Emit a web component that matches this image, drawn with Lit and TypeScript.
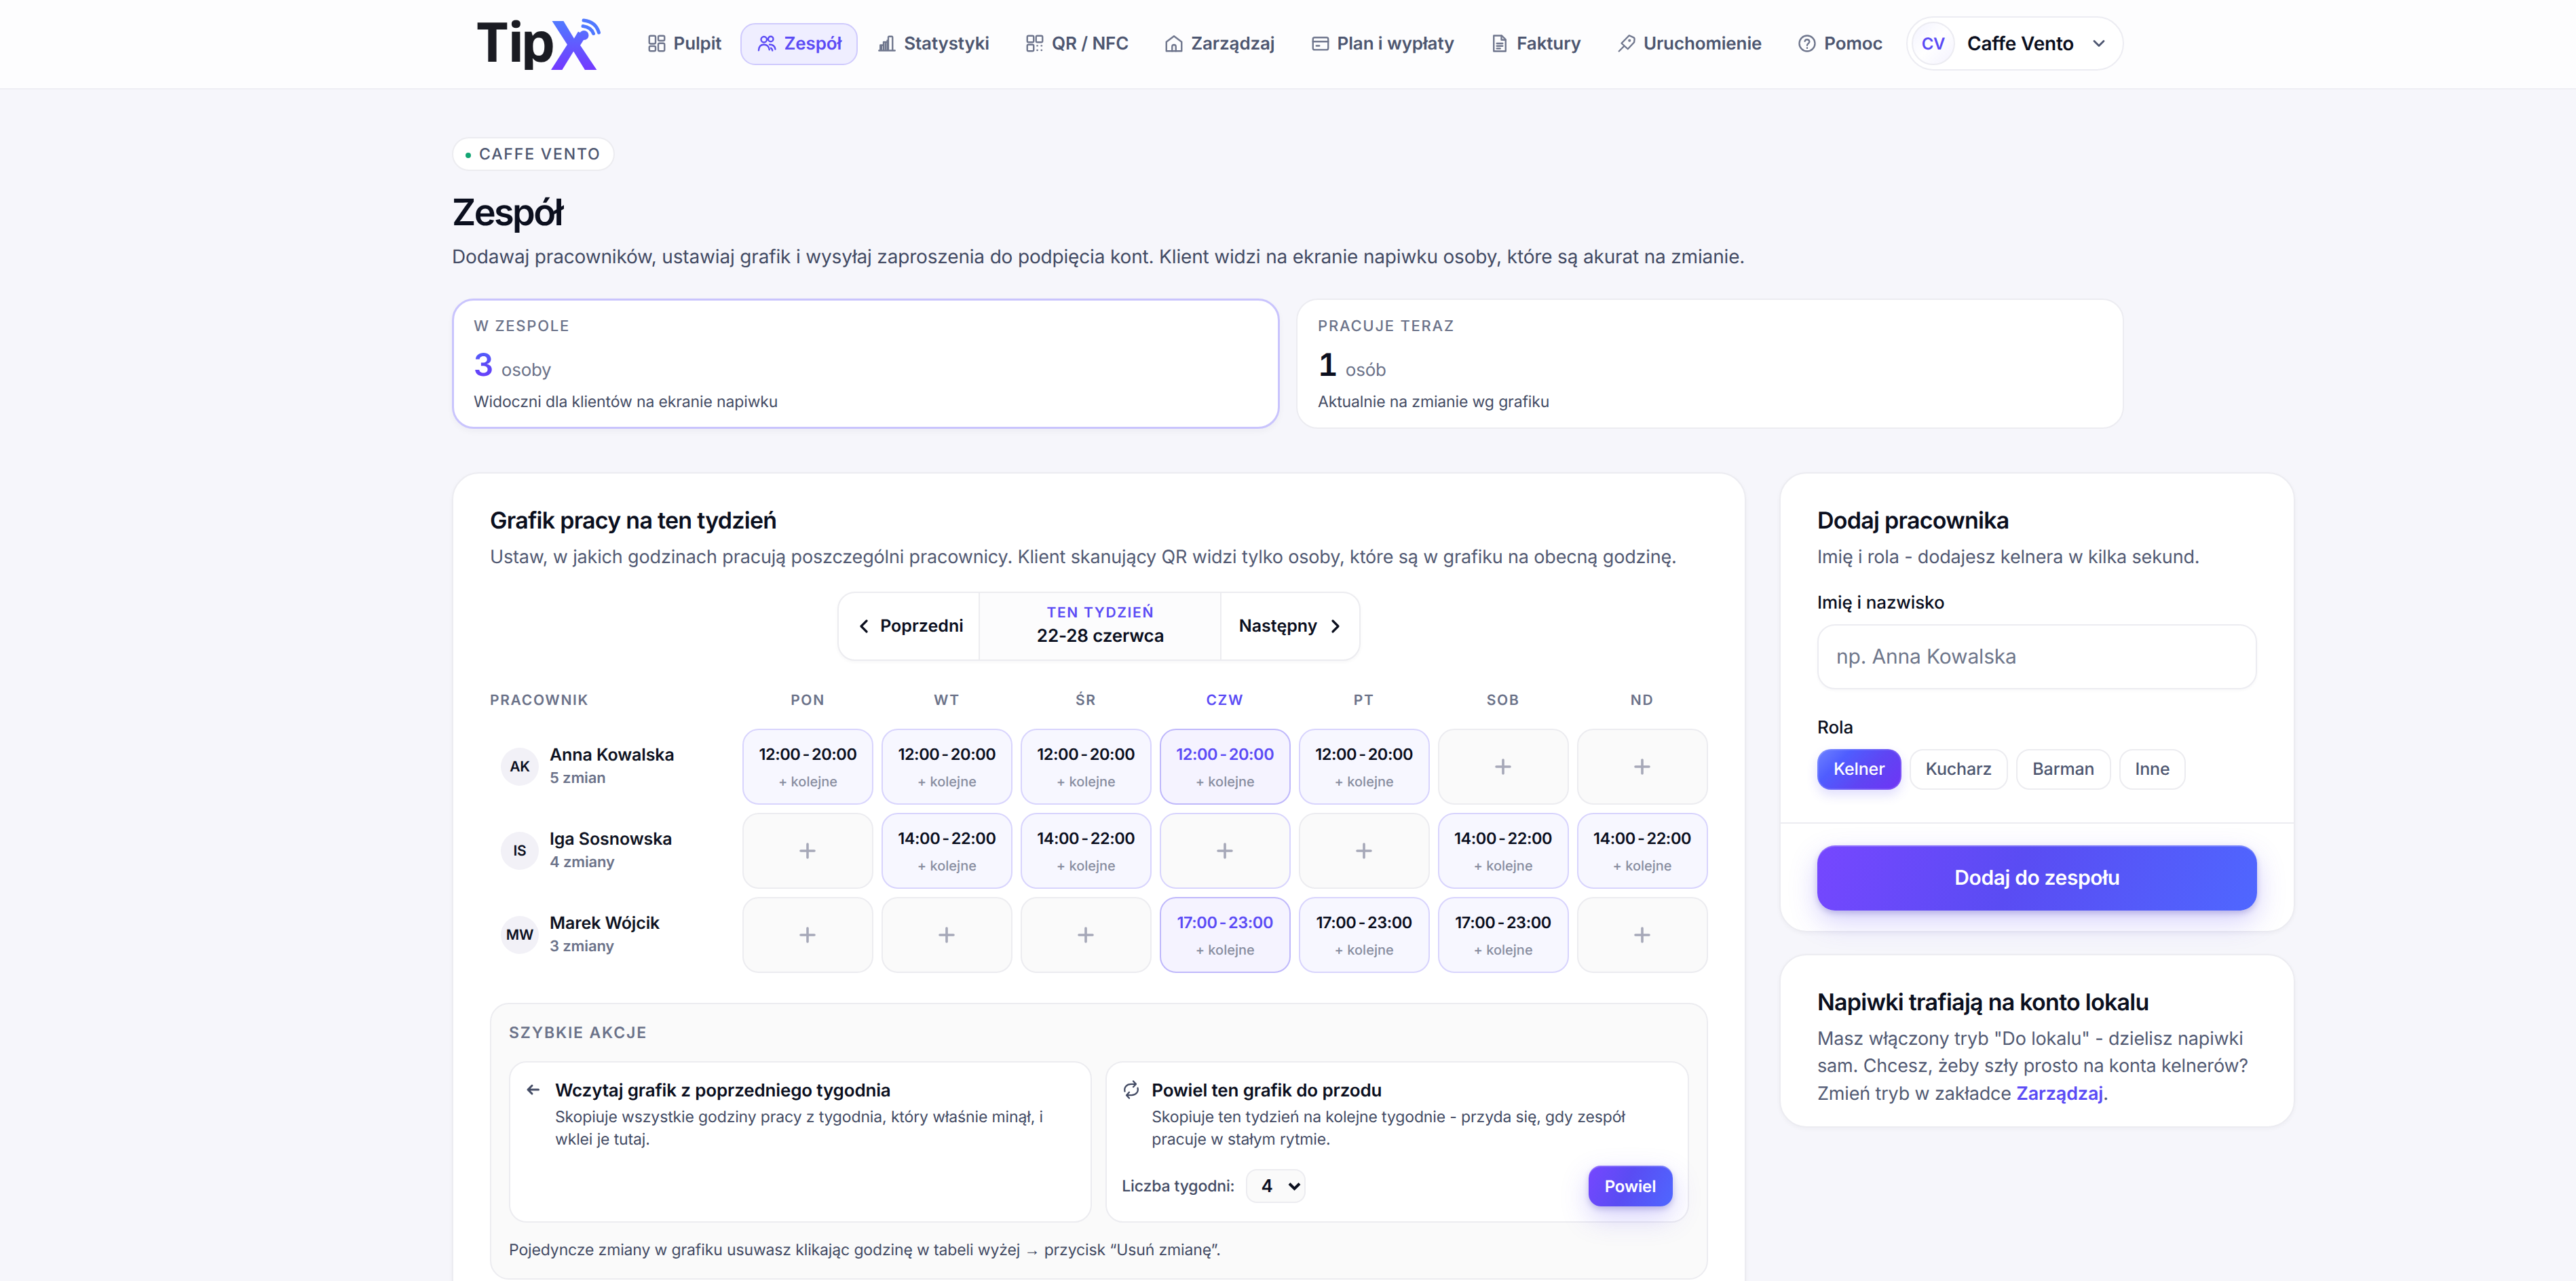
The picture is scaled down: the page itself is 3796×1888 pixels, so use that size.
import { LitElement, html, css, svg } from "lit";
import { customElement } from "lit/decorators.js";
import { classMap } from "lit/directives/class-map.js";

const ICONS = {
  dashboard: svg`<rect x="3" y="3" width="7.400" height="9.400" rx="1.600"/><rect x="13.600" y="3" width="7.400" height="5.800" rx="1.600"/><rect x="13.600" y="11.800" width="7.400" height="9.200" rx="1.600"/><rect x="3" y="15.200" width="7.400" height="5.800" rx="1.600"/>`,
  team: svg`<circle cx="8.600" cy="7.400" r="3.400"/><path d="M2.400 20.200c.2-4.400 2.600-6.800 6.200-6.800s5.800 2.200 6.400 6"/><circle cx="16.600" cy="6.800" r="3"/><path d="M15.200 13.400c3.800-.2 6.200 1.800 6.800 5.400M16.800 17.400c1 .8 1.600 1.800 1.800 3"/>`,
  stats: svg`<path d="M2.600 20.400h18.800M4.200 20v-6h3.800v6M8 20v-9.600h4.400V20M13.600 20V4.800a1 1 0 0 1 1-1h3a1 1 0 0 1 1 1V20M12.400 8.600h1.200"/><path d="M5.600 15v4M10.200 12v7" />`,
  qr: svg`<rect x="3" y="3" width="7.600" height="7.600" rx="1.500"/><rect x="13.400" y="3" width="7.600" height="7.600" rx="1.500"/><rect x="3" y="13.400" width="7.600" height="7.600" rx="1.500"/><path d="M14.700 14.700h.3M19.700 14.700h.3M14.700 20h.3M19.700 20h.3"/>`,
  home: svg`<path d="M3 10.200 12 3.400l9 6.800V21H3z"/><path d="M9.800 21v-5.200a2.200 2.200 0 0 1 4.400 0V21"/>`,
  card: svg`<rect x="3" y="5" width="18" height="14.500" rx="2"/><path d="M3 9.800h18M7 14.800h3.600"/>`,
  invoice: svg`<path d="M5 2.800h9.400L19 7.400V21.200H5z"/><path d="M14 3v4.800h4.800M8.600 12h6.800M8.600 15h6.800M8.600 18h4"/>`,
  rocket: svg`<path d="M15 2.600l5.400 2.500q1 .6.9 1.700l-.4 3.800-7.500 8-7.400-6.800z"/><path d="M3 21.200l6.200-6.200"/><circle cx="15.400" cy="8.600" r=".7"/>`,
  help: svg`<circle cx="12" cy="12" r="9.200"/><path d="M9.300 9.400a2.750 2.750 0 0 1 5.400.6c0 1.900-2.700 2.300-2.700 4.200M12 17.200v.3"/>`,
  chevDown: svg`<path d="M6 9l6 6 6-6"/>`,
};

type IconName = keyof typeof ICONS;

const icon = (name: IconName, cls = "ico") =>
  html`<svg class=${cls} viewBox="0 0 24 24">${ICONS[name]}</svg>`;

const NAV: { label: string; icon: IconName; active?: boolean }[] = [
  { label: "Pulpit", icon: "dashboard" },
  { label: "Zespół", icon: "team", active: true },
  { label: "Statystyki", icon: "stats" },
  { label: "QR / NFC", icon: "qr" },
  { label: "Zarządzaj", icon: "home" },
  { label: "Plan i wypłaty", icon: "card" },
  { label: "Faktury", icon: "invoice" },
  { label: "Uruchomienie", icon: "rocket" },
  { label: "Pomoc", icon: "help" },
];

const DAYS = ["PON", "WT", "ŚR", "CZW", "PT", "SOB", "ND"];
const TODAY = 3;

const STAFF = [
  { initials: "AK", name: "Anna Kowalska", count: "5 zmian", from: "12:00", to: "20:00", days: [0, 1, 2, 3, 4] },
  { initials: "IS", name: "Iga Sosnowska", count: "4 zmiany", from: "14:00", to: "22:00", days: [1, 2, 5, 6] },
  { initials: "MW", name: "Marek Wójcik", count: "3 zmiany", from: "17:00", to: "23:00", days: [3, 4, 5] },
];

const ROLES = ["Kelner", "Kucharz", "Barman", "Inne"];

@customElement("top-bar")
export class TopBar extends LitElement {
  static styles = css`
    :host { display: block; background: #fdfdfe; border-bottom: 2px solid #eeeef3; height: 130px; }
    .inner { width: 2464px; height: 130px; margin: 0 auto; display: flex; align-items: center; }
    .logo { width: 240px; height: 130px; margin-right: 22.500px; flex: none; overflow: visible; }
    .nav { display: flex; gap: 4px; flex: none; }
    .item {
      display: flex; align-items: center; gap: 10px; height: 56px; padding: 0 22px 2px; border: 2px solid transparent;
      border-radius: 22px; font-size: 26px; font-weight: 600; color: #4d5670; white-space: nowrap; letter-spacing: -0.005em;
    }
    .item.active { color: #5b4bf5; background: #efeeff; border-color: #cfcafd; }
    .ico { width: 30px; height: 30px; fill: none; stroke: #6f768d; stroke-width: 1.900; stroke-linecap: round; stroke-linejoin: round; }
    .active .ico { stroke: #5b4bf5; }
    .account {
      margin-left: auto; display: flex; align-items: center; box-sizing: border-box; height: 80px; width: 321px; margin-top: -2px;
      border: 2px solid #ececf2; border-radius: 40px; background: #fff; padding-left: 6px; flex: none;
    }
    .avatar {
      box-sizing: border-box; width: 64px; height: 64px; border-radius: 50%; border: 2px solid #ececf2;
      display: flex; align-items: center; justify-content: center; font-size: 24px; font-weight: 600; color: #5b4bf5; letter-spacing: -0.3px;
      background: linear-gradient(135deg, #f3f3ff, #fff 50%, #f3f2fe);
    }
    .name { margin-left: 18px; font-size: 28px; font-weight: 600; color: #0b0f1e; flex: 1; letter-spacing: -0.2px; }
    .chev { width: 28px; height: 28px; margin-right: 21px; fill: none; stroke: #4d5670; stroke-width: 2.400; stroke-linecap: round; stroke-linejoin: round; }
  `;

  render() {
    return html`<div class="inner">
      <svg class="logo" viewBox="0 0 240 130">
        <defs>
          <linearGradient id="g" gradientUnits="userSpaceOnUse" x1="0" y1="28" x2="0" y2="104">
            <stop offset="0" stop-color="#4f7dff" /><stop offset="1" stop-color="#7438ff" />
          </linearGradient>
        </defs>
        <g font-family="Open Sans" font-size="81" font-weight="700" fill="#1a1b22">
          <text x="36" y="91">T</text><text x="82" y="91">i</text><text x="101" y="91">p</text>
        </g>
        <path d="M100 103h40v16h-40z" fill="#fdfdfe" />
        <text x="146" y="103" font-family="Open Sans" font-size="101" font-weight="700" fill="url(#g)">X</text>
        <path d="M181 26h40v30h-17l-23-12z" fill="#fdfdfe" />
        <circle cx="194.500" cy="52" r="7" fill="url(#g)" />
        <g fill="none" stroke="#4f78ff" stroke-width="5" stroke-linecap="round">
          <path d="M193 38.500q12 1.500 15.500 11" /><path d="M194 30q18 2 22.500 18" />
        </g>
      </svg>
      <nav class="nav">
        ${NAV.map((n) => html`<div class=${classMap({ item: true, active: !!n.active })}>${icon(n.icon)}<span>${n.label}</span></div>`)}
      </nav>
      <div class="account">
        <div class="avatar">CV</div>
        <div class="name">Caffe Vento</div>
        ${icon("chevDown", "chev")}
      </div>
    </div>`;
  }
}

@customElement("shift-grid")
export class ShiftGrid extends LitElement {
  static styles = css`
    :host { display: block; }
    .grid { display: grid; grid-template-columns: 360px repeat(7, minmax(0, 1fr)); gap: 12px; }
    .head { font-size: 21px; line-height: 34px; font-weight: 600; letter-spacing: 0.080em; color: #6b7289; text-align: center; margin-bottom: 12px; }
    .head.first { text-align: left; }
    .head.today { color: #5b4bf5; }
    .person { display: flex; align-items: center; padding-left: 16px; gap: 16px; }
    .avatar {
      width: 56px; height: 56px; border-radius: 50%; background: #f2f1f7; display: flex; align-items: center; justify-content: center;
      font-size: 21px; font-weight: 600; color: #0b0f1e; letter-spacing: -0.2px;
    }
    .who { margin-top: -1px; }
    .name { font-size: 25px; line-height: 34px; font-weight: 600; color: #0f1322; letter-spacing: -0.004em; }
    .count { font-size: 22px; line-height: 34px; font-weight: 600; color: #6b7289; letter-spacing: -0.006em; }
    .cell {
      box-sizing: border-box; height: 112px; border: 2px solid #ececf0; border-radius: 24px; background: #fafafa;
      display: flex; flex-direction: column; align-items: center; justify-content: center;
    }
    .cell.on { background: #f7f7ff; border-color: #d8d4fd; padding-top: 4px; }
    .cell.today { border-color: #d8d4fd; }
    .cell.on.today { background: #f5f3ff; border-color: #bfb8fb; }
    .time { font-size: 23.500px; line-height: 40px; font-weight: 600; color: #0b0f1e; display: flex; gap: 3px; letter-spacing: -0.018em; }
    .today .time { color: #5b4bf5; }
    .more { font-size: 20px; line-height: 41px; color: #888da0; font-weight: 500; }
    .plus { width: 24px; height: 24px; stroke: #a6a8b8; stroke-width: 3.600; stroke-linecap: round; fill: none; }
  `;

  render() {
    return html`<div class="grid">
      <div class="head first">PRACOWNIK</div>
      ${DAYS.map((d, i) => html`<div class=${classMap({ head: true, today: i === TODAY })}>${d}</div>`)}
      ${STAFF.map(
        (p) => html`<div class="person">
            <div class="avatar">${p.initials}</div>
            <div class="who"><div class="name">${p.name}</div><div class="count">${p.count}</div></div>
          </div>
          ${DAYS.map((_, i) => {
            const on = p.days.includes(i);
            return html`<div class=${classMap({ cell: true, on, today: i === TODAY })}>
              ${on
                ? html`<div class="time"><span>${p.from}</span><span>-</span><span>${p.to}</span></div><div class="more">+ kolejne</div>`
                : html`<svg class="plus" viewBox="0 0 24 24"><path d="M12 2v20M2 12h20" /></svg>`}
            </div>`;
          })}`
      )}
    </div>`;
  }
}

@customElement("app-root")
export class AppRoot extends LitElement {
  static styles = css`
    :host {
      display: block; height: 1888px; overflow: hidden; background: #f6f6fb; color: #0b0f1e;
      font-family: Inter, "Liberation Sans", sans-serif; text-rendering: geometricPrecision;
    }
    .page { width: 2464px; margin: 0 auto; padding-top: 70px; }
    .pill {
      display: inline-flex; align-items: center; box-sizing: border-box; height: 50px; padding: 0 18px; gap: 12px; vertical-align: top;
      border: 2px solid #ececf0; border-radius: 25px; background: #fff; font-size: 23px; font-weight: 500; letter-spacing: 0.080em; color: #4d5670;
    }
    .dot { width: 8px; height: 8px; border-radius: 50%; background: #12a573; margin-top: 3px; }
    .title { margin: 29px 0 0; font-size: 54px; line-height: 66px; font-weight: 600; letter-spacing: -0.048em; }
    .lead { margin: 11px 0 0; font-size: 28px; line-height: 40px; color: #434b64; white-space: nowrap; letter-spacing: -0.006em; }
    .stats { display: grid; grid-template-columns: 1fr 1fr; gap: 24px; margin-top: 42px; }
    .stat { box-sizing: border-box; height: 192px; border: 2px solid #ececf1; border-radius: 32px; background: #fff; padding: 22px 30px 0; }
    .stat.main { border: 3px solid #c9c4fd; padding: 21px 29px 0; box-shadow: 0 4px 10px rgba(20, 20, 50, 0.040); }
    .stat-label { font-size: 22px; line-height: 34px; font-weight: 500; letter-spacing: 0.080em; color: #6b7289; }
    .stat-row { display: flex; align-items: baseline; gap: 12px; margin-top: 12px; line-height: 56px; }
    .num { font-size: 46px; font-weight: 600; font-variant-numeric: tabular-nums; letter-spacing: -0.020em; }
    .main .num { background: linear-gradient(180deg, #4f67ff, #5b4bf5 45%, #6f3cff); -webkit-background-clip: text; background-clip: text; color: transparent; }
    .unit { font-size: 26px; color: #6b7289; letter-spacing: -0.010em; }
    .stat-sub { font-size: 23px; line-height: 32px; color: #434b64; margin-top: 2px; letter-spacing: -0.006em; }

    .cols { display: grid; grid-template-columns: 1906.500px 760px; gap: 49.500px; margin-top: 64px; align-items: start; width: 2716px; }
    .card { box-sizing: border-box; background: #fff; border: 2px solid #ececf1; border-radius: 40px; box-shadow: 0 2px 6px rgba(20, 20, 50, 0.040); }
    .schedule { padding: 47px 54px 60px; }
    .h2 { margin: 0; font-size: 34px; line-height: 46px; font-weight: 600; letter-spacing: -0.022em; }
    .desc { margin: 10px 0 0; font-size: 27px; line-height: 40px; color: #525a73; letter-spacing: -0.006em; }
    .week {
      display: flex; width: 771px; box-sizing: border-box; height: 102px; margin: 31px auto 0; border: 2px solid #ececf0; border-radius: 26px;
      overflow: hidden; background: #fff; box-shadow: 0 2px 5px rgba(20, 20, 50, 0.040);
    }
    .wbtn { display: flex; align-items: center; box-sizing: border-box; padding: 0 22px 0 25px; font-size: 25px; font-weight: 600; width: 206px; justify-content: space-between; }
    .wbtn.next { width: 203px; padding: 0 23px 0 26px; }
    .wchev { width: 24px; height: 24px; stroke: #0b0f1e; stroke-width: 3.200; fill: none; stroke-linecap: round; stroke-linejoin: round; }
    .wmid { flex: 1; border: solid #ececf0; border-width: 0 2px; background: #fcfcfd; text-align: center; padding: 14px 0 0 2px; }
    .wtop { font-size: 21px; line-height: 32px; font-weight: 600; letter-spacing: 0.080em; color: #5b4bf5; }
    .wrange { font-size: 26px; line-height: 35px; font-weight: 600; letter-spacing: -0.006em; }
    .gridbox { margin-top: 42px; display: block; }
    .quick { margin-top: 44px; box-sizing: border-box; height: 408px; border: 2px solid #ececf0; border-radius: 28px; background: #fafafa; padding: 24px 26px; }
    .qtitle { font-size: 23px; line-height: 36px; font-weight: 600; letter-spacing: 0.080em; color: #6b7289; }
    .qcards { display: grid; grid-template-columns: 1fr 1fr; gap: 20px; margin-top: 24px; }
    .qcard { box-sizing: border-box; height: 238px; border: 2px solid #ececf0; border-radius: 26px; background: #fff; padding: 23px 22px 22px; }
    .qrow { display: flex; gap: 16px; }
    .qico { width: 28px; height: 28px; margin-top: 3px; flex: none; fill: none; stroke: #434b64; stroke-width: 2.300; stroke-linecap: round; stroke-linejoin: round; overflow: visible; }
    .qh { font-size: 26px; line-height: 37px; font-weight: 600; letter-spacing: -0.006em; }
    .qd { font-size: 23px; line-height: 32.500px; color: #434b64; margin-top: 4px; letter-spacing: -0.006em; max-width: 740px; }
    .qform { display: flex; align-items: center; margin-top: 23px; font-size: 23px; font-weight: 500; color: #434b64; letter-spacing: -0.006em; }
    .select {
      box-sizing: border-box; width: 88px; height: 50px; margin-left: 17px; border: 2px solid #ececf0; border-radius: 16px; background: #fafafa;
      display: flex; align-items: center; justify-content: space-between; padding: 0 5px 0 20px; font-size: 26px; font-weight: 600; color: #0b0f1e;
    }
    .selchev { width: 19px; height: 13px; fill: none; stroke: #0b0f1e; stroke-width: 4; }
    .primary {
      display: flex; align-items: center; justify-content: center; color: #fff; background: linear-gradient(115deg, #7647ff 0%, #5a4cf3 45%, #4f67ff 100%);
      box-shadow: inset 0 2px 0 rgba(255, 255, 255, 0.200), 0 4px 8px rgba(60, 50, 160, 0.240), 0 16px 40px rgba(91, 75, 245, 0.260);
    }
    .powiel { margin-left: auto; width: 124px; height: 60px; border-radius: 18px; font-size: 24px; font-weight: 600; }
    .qnote { font-size: 23px; line-height: 36px; color: #434b64; margin-top: 22px; letter-spacing: -0.006em; }
    .arrow { font-family: "Liberation Sans", sans-serif; }

    .side { display: grid; gap: 32px; }
    .body { padding: 47px 54px 48px; }
    .lbl { font-size: 26px; line-height: 36px; font-weight: 500; margin-top: 30px; letter-spacing: -0.004em; }
    .input {
      box-sizing: border-box; height: 96px; margin-top: 13px; border: 2px solid #ececf1; border-radius: 26px; display: flex; align-items: center;
      padding: 0 26px; font-size: 30px; color: #6f778b; box-shadow: 0 2px 4px rgba(20, 20, 50, 0.030); letter-spacing: -0.006em;
    }
    .lbl.role { margin-top: 39px; }
    .chips { display: flex; gap: 12px; margin-top: 13px; }
    .chip {
      box-sizing: border-box; height: 60px; padding: 0 22px; border: 2px solid #ececf0; border-radius: 20px; display: flex; align-items: center;
      font-size: 25px; font-weight: 500; color: #4d5670; letter-spacing: -0.006em;
    }
    .chip.on {
      color: #fff; border-color: rgba(255, 255, 255, 0.120); background: linear-gradient(135deg, #6f83ff 0%, #4f5dff 28%, #5f45f3 60%, #6f34f5 100%) border-box;
      box-shadow: 0 8px 16px rgba(91, 75, 245, 0.180);
    }
    .foot { border-top: 2px solid #ececf1; padding: 32px 54px 30px; }
    .add { height: 96px; border-radius: 26px; font-size: 30px; font-weight: 600; letter-spacing: -0.4px; }
    .tips { padding: 47px 54px 28px; }
    .tips .desc { line-height: 40.300px; }
    .link { color: #5b4bf5; font-weight: 600; }
  `;

  private stat(label: string, n: number, unit: string, sub: string, main = false) {
    return html`<div class=${classMap({ stat: true, main })}>
      <div class="stat-label">${label}</div>
      <div class="stat-row"><span class="num">${n}</span><span class="unit">${unit}</span></div>
      <div class="stat-sub">${sub}</div>
    </div>`;
  }

  render() {
    return html`
      <top-bar></top-bar>
      <main class="page">
        <div class="pill"><span class="dot"></span>CAFFE VENTO</div>
        <h1 class="title">Zespół</h1>
        <p class="lead">Dodawaj pracowników, ustawiaj grafik i wysyłaj zaproszenia do podpięcia kont. Klient widzi na ekranie napiwku osoby, które są akurat na zmianie.</p>
        <div class="stats">
          ${this.stat("W ZESPOLE", 3, "osoby", "Widoczni dla klientów na ekranie napiwku", true)}
          ${this.stat("PRACUJE TERAZ", 1, "osób", "Aktualnie na zmianie wg grafiku")}
        </div>
        <div class="cols">
          <section class="card schedule">
            <h2 class="h2">Grafik pracy na ten tydzień</h2>
            <p class="desc">Ustaw, w jakich godzinach pracują poszczególni pracownicy. Klient skanujący QR widzi tylko osoby, które są w grafiku na obecną godzinę.</p>
            <div class="week">
              <div class="wbtn"><svg class="wchev" viewBox="0 0 24 24"><path d="M16 4l-8 8 8 8" /></svg><span>Poprzedni</span></div>
              <div class="wmid"><div class="wtop">TEN TYDZIEŃ</div><div class="wrange">22-28 czerwca</div></div>
              <div class="wbtn next"><span>Następny</span><svg class="wchev" viewBox="0 0 24 24"><path d="M8 4l8 8-8 8" /></svg></div>
            </div>
            <shift-grid class="gridbox"></shift-grid>
            <div class="quick">
              <div class="qtitle">SZYBKIE AKCJE</div>
              <div class="qcards">
                <div class="qcard">
                  <div class="qrow">
                    <svg class="qico" viewBox="0 0 28 28"><path d="M4 14h15.500M10 8l-6 6 6 6" stroke-width="3" /></svg>
                    <div>
                      <div class="qh">Wczytaj grafik z poprzedniego tygodnia</div>
                      <div class="qd">Skopiuje wszystkie godziny pracy z tygodnia, który właśnie minął, i wklei je tutaj.</div>
                    </div>
                  </div>
                </div>
                <div class="qcard">
                  <div class="qrow">
                    <svg class="qico" viewBox="0 0 28 28"><path d="M4.500 16.500C3 10.500 7.500 5.800 13.500 5.800H20.500M17 1.400l4 4.400-4 4.200M23.500 11.500c1.500 6-3 10.700-9 10.700H7.500M11 17.800l-4 4.400 4 4.400" /></svg>
                    <div>
                      <div class="qh">Powiel ten grafik do przodu</div>
                      <div class="qd">Skopiuje ten tydzień na kolejne tygodnie - przyda się, gdy zespół pracuje w stałym rytmie.</div>
                    </div>
                  </div>
                  <div class="qform">
                    <span>Liczba tygodni:</span>
                    <div class="select">4<svg class="selchev" viewBox="0 0 19 13"><path d="M2 2.500l7.500 7.500L17 2.500" /></svg></div>
                    <div class="primary powiel">Powiel</div>
                  </div>
                </div>
              </div>
              <div class="qnote">Pojedyncze zmiany w grafiku usuwasz klikając godzinę w tabeli wyżej <span class="arrow">→</span> przycisk “Usuń zmianę”.</div>
            </div>
          </section>
          <aside class="side">
            <section class="card">
              <div class="body">
                <h2 class="h2">Dodaj pracownika</h2>
                <p class="desc">Imię i rola - dodajesz kelnera w kilka sekund.</p>
                <div class="lbl">Imię i nazwisko</div>
                <div class="input">np. Anna Kowalska</div>
                <div class="lbl role">Rola</div>
                <div class="chips">
                  ${ROLES.map((r, i) => html`<div class=${classMap({ chip: true, on: i === 0 })}>${r}</div>`)}
                </div>
              </div>
              <div class="foot"><div class="primary add">Dodaj do zespołu</div></div>
            </section>
            <section class="card tips">
              <h2 class="h2">Napiwki trafiają na konto lokalu</h2>
              <p class="desc">Masz włączony tryb "Do lokalu" - dzielisz napiwki sam. Chcesz, żeby szły prosto na konta kelnerów? Zmień tryb w zakładce <span class="link">Zarządzaj</span>.</p>
            </section>
          </aside>
        </div>
      </main>
    `;
  }
}
